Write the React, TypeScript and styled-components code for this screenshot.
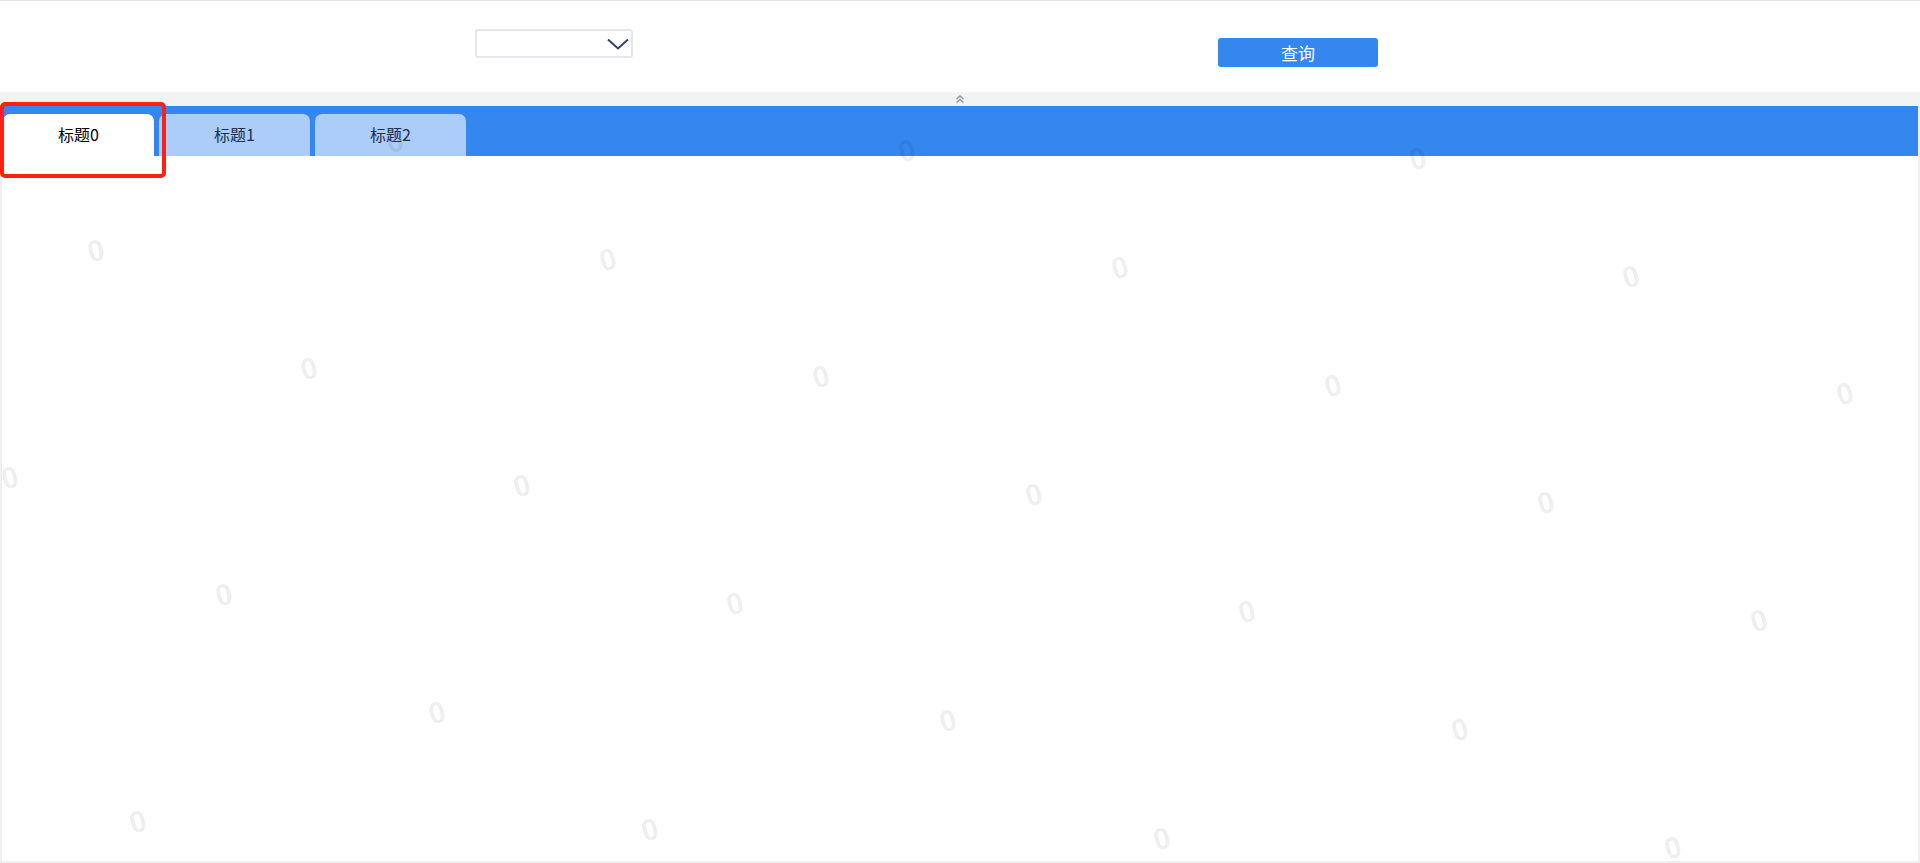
import React from "react";
import styled, { createGlobalStyle } from "styled-components";

const GlobalStyle = createGlobalStyle`
  html, body {
    margin: 0;
    padding: 0;
    background: #ffffff;
    font-family: "Liberation Sans", "Noto Sans CJK SC", sans-serif;
  }
  * { box-sizing: border-box; }
`;

const Page = styled.div`
  width: 1920px;
  height: 863px;
  display: flex;
  flex-direction: column;
  overflow: hidden;
`;

const FilterBar = styled.div`
  height: 92px;
  flex: none;
  border-top: 1px solid #e4e4e4;
  display: flex;
  align-items: flex-start;
  padding-left: 475px;
`;

const SelectBox = styled.div`
  width: 158px;
  height: 29px;
  margin-top: 28px;
  border: 2px solid #e6e7ec;
  border-radius: 3px;
  background: #fff;
  display: flex;
  align-items: center;
  justify-content: flex-end;
  padding-right: 2px;
`;

const QueryButton = styled.button`
  width: 160px;
  height: 29px;
  margin-top: 37px;
  margin-left: 585px;
  border: none;
  border-radius: 3px;
  background: #3586ef;
  color: #ffffff;
  font-family: "Noto Sans CJK SC", sans-serif;
  font-size: 17px;
  line-height: 29px;
  padding: 0;
`;

const CollapseBar = styled.div`
  height: 14px;
  flex: none;
  background: #f2f3f3;
  display: flex;
  align-items: center;
  justify-content: center;
`;

const PanelWrap = styled.div`
  position: relative;
  flex: 1;
`;

const Panel = styled.div`
  height: 100%;
  border: 2px solid #efefef;
  border-top: none;
  display: flex;
  flex-direction: column;
`;

const TabBar = styled.div`
  height: 50px;
  flex: none;
  background: #3586ef;
  display: flex;
  align-items: flex-end;
  gap: 5px;
  padding-left: 1px;
`;

const Tab = styled.div<{ $active?: boolean }>`
  width: 151px;
  height: 42px;
  border-radius: 7px 7px 0 0;
  background: ${(p) => (p.$active ? "#ffffff" : "#accdf7")};
  color: ${(p) => (p.$active ? "#000000" : "#1d3050")};
  font-family: "Noto Sans CJK SC", sans-serif;
  font-size: 16px;
  font-weight: 400;
  display: flex;
  align-items: center;
  justify-content: center;
  padding-bottom: 2px;
`;

const Content = styled.div`
  flex: 1;
  background: #ffffff;
`;

const WatermarkLayer = styled.div`
  position: absolute;
  inset: 0;
  overflow: hidden;
  pointer-events: none;
`;

const Mark = styled.span`
  position: absolute;
  font-family: "Liberation Sans", sans-serif;
  font-weight: bold;
  font-size: 30px;
  line-height: 1;
  color: rgba(0, 0, 0, 0.075);
  transform: translate(-50%, -50%) rotate(-15deg);
  user-select: none;
`;

const Highlight = styled.div`
  position: absolute;
  left: 0;
  top: -4px;
  width: 166px;
  height: 76px;
  border: 4px solid #fb2117;
  border-radius: 5px;
  pointer-events: none;
`;

const marks: { x: number; y: number }[] = [];
for (let r = -3; r <= 7; r++) {
  for (let c = -3; c <= 6; c++) {
    const x = 96 + c * 511.8 + r * 213.1;
    const y = 251 + c * 8.57 + r * 117.6;
    if (x > -10 && x < 1930 && y > 120 && y < 880) {
      marks.push({ x, y: y - 106 });
    }
  }
}

const tabs = ["标题0", "标题1", "标题2"];

export default function App() {
  return (
    <>
      <GlobalStyle />
      <Page>
        <FilterBar>
          <SelectBox>
            <svg width="22" height="12" viewBox="0 0 22 12">
              <polyline
                points="1,1.5 11,10.5 21,1.5"
                fill="none"
                stroke="#2f4468"
                strokeWidth="2"
              />
            </svg>
          </SelectBox>
          <QueryButton>查询</QueryButton>
        </FilterBar>
        <CollapseBar>
          <svg width="10" height="8" viewBox="0 0 10 8">
            <polyline points="1.5,4 5,1 8.5,4" fill="none" stroke="#8e939c" strokeWidth="1.4" />
            <polyline points="1.5,7.5 5,4.5 8.5,7.5" fill="none" stroke="#8e939c" strokeWidth="1.4" />
          </svg>
        </CollapseBar>
        <PanelWrap>
          <Panel>
            <TabBar>
              {tabs.map((t, i) => (
                <Tab key={t} $active={i === 0}>
                  {t}
                </Tab>
              ))}
            </TabBar>
            <Content />
          </Panel>
          <WatermarkLayer>
            {marks.map((m, i) => (
              <Mark key={i} style={{ left: m.x, top: m.y }}>
                0
              </Mark>
            ))}
          </WatermarkLayer>
          <Highlight />
        </PanelWrap>
      </Page>
    </>
  );
}
